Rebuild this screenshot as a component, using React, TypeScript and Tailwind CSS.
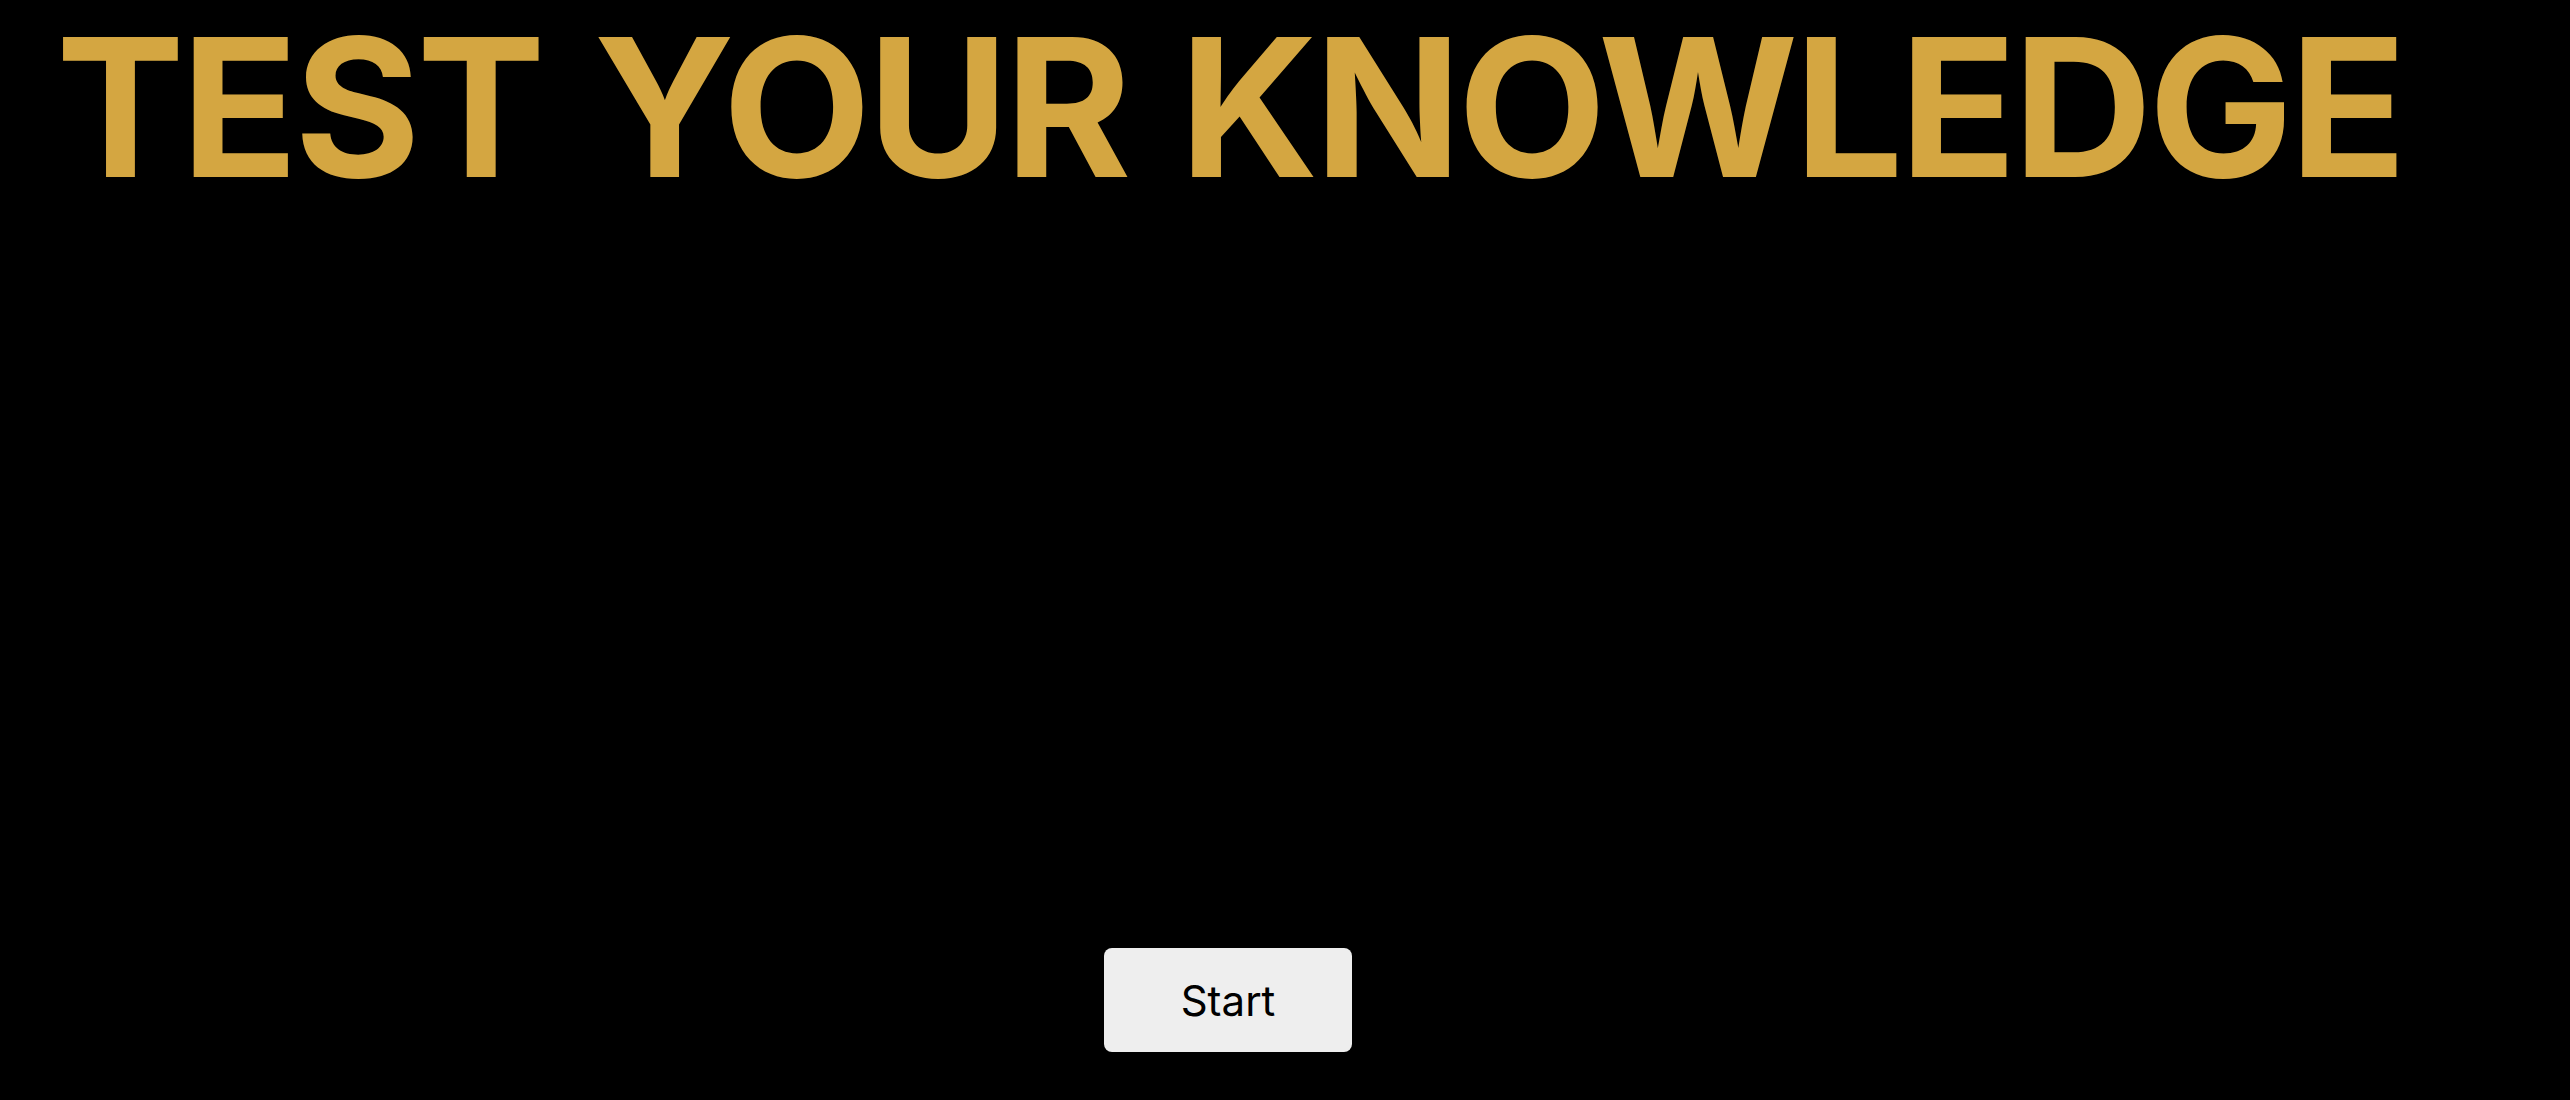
export default function App() {
  return (
    <div className="min-h-screen w-full bg-black">
      <div className="flex flex-col px-[56px] pt-px">
        <h1 className="text-[193px] leading-[1.1] font-bold tracking-[-0.02em] [word-spacing:10px] text-[#d4a641] [font-family:Inter,'Liberation_Sans',sans-serif]">
          TEST YOUR KNOWLEDGE
        </h1>
        <div className="h-[735px]" />
        <div className="flex pl-[1048px]">
          <button
            type="button"
            className="flex h-[104px] w-[248px] items-center justify-center rounded-[8px] bg-[#eeeeee] text-[42px] text-black [font-family:Inter,'Liberation_Sans',sans-serif]"
          >
            Start
          </button>
        </div>
      </div>
    </div>
  );
}
